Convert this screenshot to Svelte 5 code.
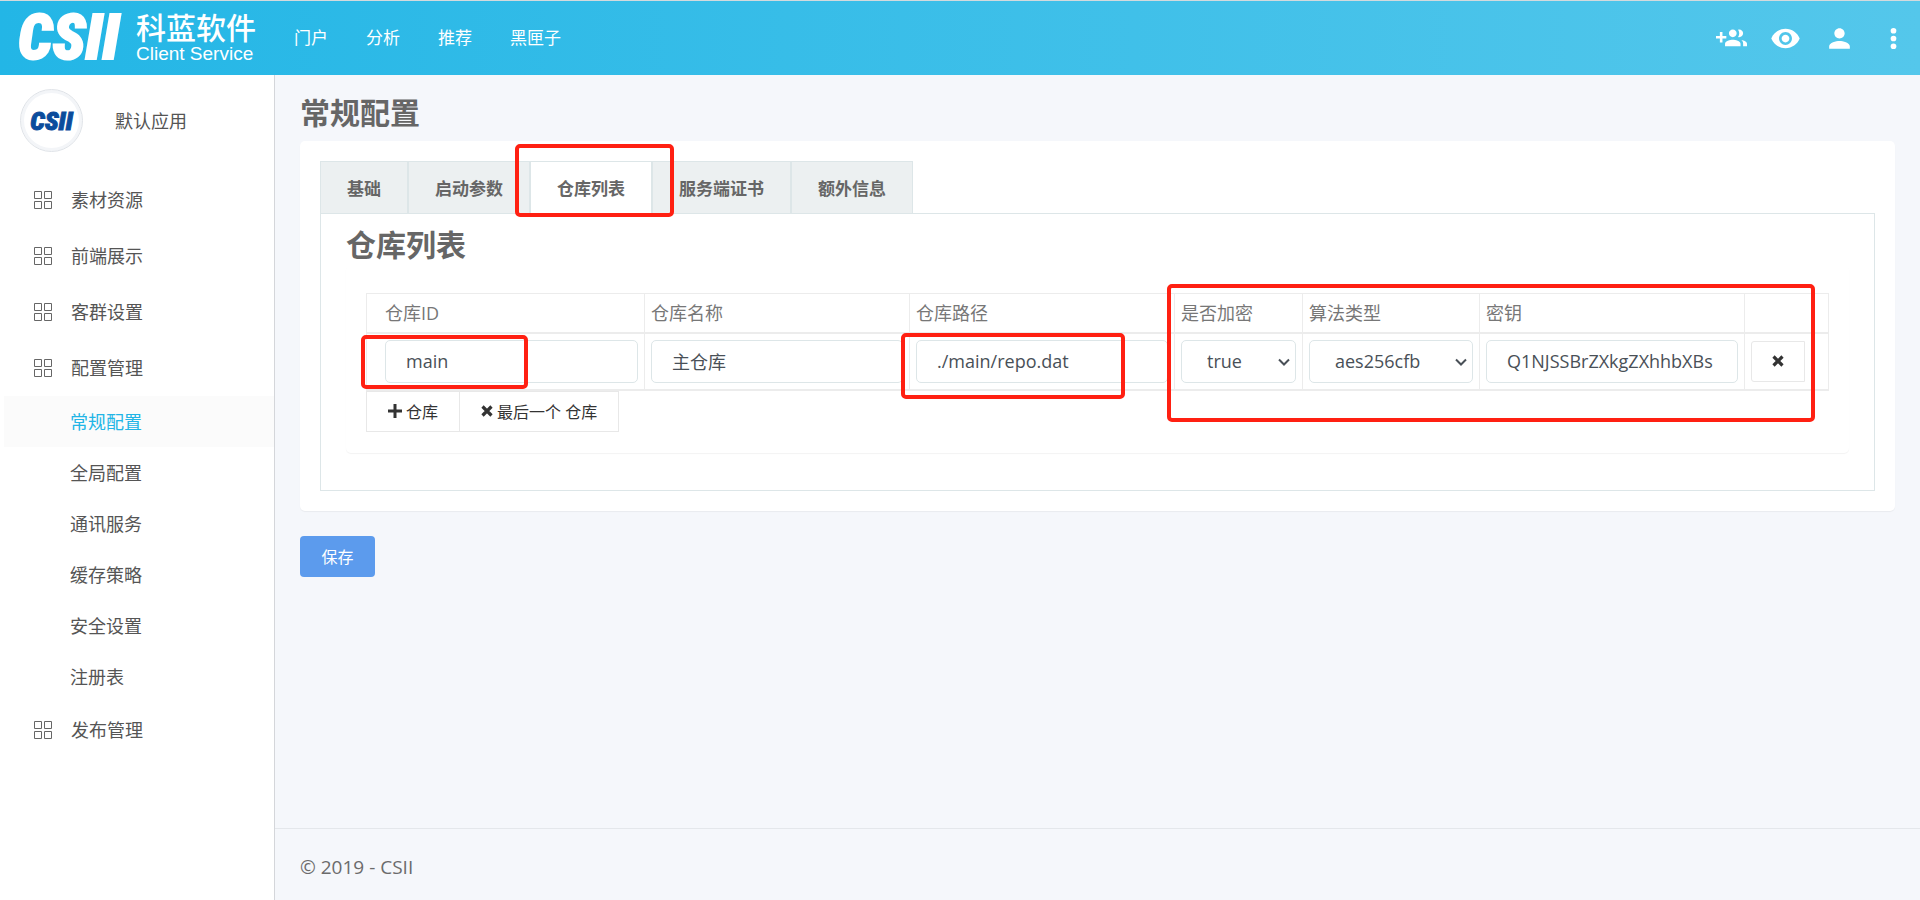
<script lang="ts">
	interface MenuItem {
		label: string
		children?: string[]
	}

	const nav = ['门户', '分析', '推荐', '黑匣子']
	const menu: MenuItem[] = [
		{ label: '素材资源' },
		{ label: '前端展示' },
		{ label: '客群设置' },
		{
			label: '配置管理',
			children: ['常规配置', '全局配置', '通讯服务', '缓存策略', '安全设置', '注册表']
		},
		{ label: '发布管理' }
	]
	const tabs = ['基础', '启动参数', '仓库列表', '服务端证书', '额外信息']

	let activeMenu = $state('常规配置')
	let activeTab = $state('仓库列表')
	let repo = $state({
		id: 'main',
		name: '主仓库',
		path: './main/repo.dat',
		encrypted: 'true',
		algorithm: 'aes256cfb',
		key: 'Q1NJSSBrZXkgZXhhbXBs'
	})
</script>

{#snippet cross()}
	<svg class="glyph" viewBox="0 0 12 12" aria-hidden="true">
		<path d="M1.500 1.500L10.500 10.500M10.500 1.500L1.500 10.500" stroke="currentColor" stroke-width="3.200" />
	</svg>
{/snippet}

{#snippet chevron()}
	<svg class="chevron" viewBox="0 0 12 8" aria-hidden="true">
		<path d="M1 1.500L6 6.500L11 1.500" fill="none" stroke="currentColor" stroke-width="2" />
	</svg>
{/snippet}

<div class="page">
	<header class="header">
		<a class="brand" href="#home">
			<span class="mark">CSII</span>
			<span class="brand-text">
				<span class="brand-name">科蓝软件</span>
				<span class="brand-sub">Client Service</span>
			</span>
		</a>
		<nav class="nav">
			{#each nav as item}
				<a href="#{item}">{item}</a>
			{/each}
		</nav>
		<div class="actions">
			<button aria-label="添加成员">
				<svg viewBox="0 0 24 24">
					<path d="M8 10H5V7H3v3H0v2h3v3h2v-3h3v-2zm10 1c1.66 0 2.99-1.34 2.99-3S19.66 5 18 5c-.32 0-.63.05-.91.14.57.81.9 1.79.9 2.86s-.34 2.04-.9 2.86c.28.09.59.14.91.14zm-5 0c1.66 0 2.99-1.34 2.99-3S14.66 5 13 5c-1.66 0-3 1.34-3 3s1.34 3 3 3zm6.62 2.16c.83.73 1.38 1.66 1.38 2.84v2h3v-2c0-1.54-2.37-2.49-4.38-2.84zM13 13c-2 0-6 1-6 3v2h12v-2c0-2-4-3-6-3z" />
				</svg>
			</button>
			<button aria-label="预览">
				<svg viewBox="0 0 24 24">
					<path d="M12 4.500C7 4.500 2.730 7.610 1 12c1.730 4.390 6 7.500 11 7.500s9.270-3.110 11-7.500c-1.730-4.390-6-7.500-11-7.500zM12 17c-2.760 0-5-2.240-5-5s2.240-5 5-5 5 2.240 5 5-2.240 5-5 5zm0-8c-1.660 0-3 1.340-3 3s1.340 3 3 3 3-1.340 3-3-1.340-3-3-3z" />
				</svg>
			</button>
			<button aria-label="用户">
				<svg viewBox="0 0 24 24">
					<path d="M12 12c2.210 0 4-1.790 4-4s-1.790-4-4-4-4 1.790-4 4 1.790 4 4 4zm0 2c-2.670 0-8 1.340-8 4v2h16v-2c0-2.660-5.330-4-8-4z" />
				</svg>
			</button>
			<button aria-label="更多">
				<svg viewBox="0 0 24 24">
					<circle cx="12" cy="6" r="2.200" />
					<circle cx="12" cy="12" r="2.200" />
					<circle cx="12" cy="18" r="2.200" />
				</svg>
			</button>
		</div>
	</header>

	<div class="body">
		<aside class="sidebar">
			<div class="profile">
				<div class="avatar"><span class="mark small">CSII</span></div>
				<span>默认应用</span>
			</div>
			<ul class="menu">
				{#each menu as item}
					<li>
						<a class="menu-item" href="#{item.label}">
							<svg class="grid-icon" viewBox="0 0 18 18" aria-hidden="true">
								<path d="M0.500 0.500h7v7h-7zM10.500 0.500h7v7h-7zM0.500 10.500h7v7h-7zM10.500 10.500h7v7h-7z" />
							</svg>
							{item.label}
						</a>
						{#if item.children}
							<ul class="submenu">
								{#each item.children as child}
									<li>
										<a
											href="#{child}"
											class:active={child === activeMenu}
											onclick={() => (activeMenu = child)}>{child}</a
										>
									</li>
								{/each}
							</ul>
						{/if}
					</li>
				{/each}
			</ul>
		</aside>

		<div class="main">
			<main class="content">
				<h1>常规配置</h1>
				<section class="card">
					<div class="tabs" role="tablist">
						{#each tabs as tab}
							<button
								role="tab"
								class="tab"
								class:active={tab === activeTab}
								aria-selected={tab === activeTab}
								onclick={() => (activeTab = tab)}
							>
								{tab}
								{#if tab === '仓库列表'}<span class="mark-box mark-tab"></span>{/if}
							</button>
						{/each}
					</div>
					<div class="panel">
						<h2>仓库列表</h2>
						<div class="well">
							<div class="table-wrap">
								<table>
									<colgroup>
										<col class="c-id" />
										<col class="c-text" />
										<col class="c-text" />
										<col class="c-enc" />
										<col class="c-alg" />
										<col class="c-text" />
										<col />
									</colgroup>
									<thead>
										<tr>
											<th id="h-id">仓库ID</th>
											<th id="h-name">仓库名称</th>
											<th id="h-path">仓库路径</th>
											<th id="h-enc">是否加密</th>
											<th id="h-alg">算法类型</th>
											<th id="h-key">密钥</th>
											<th></th>
										</tr>
									</thead>
									<tbody>
										<tr>
											<td>
												<input type="text" aria-labelledby="h-id" bind:value={repo.id} />
												<span class="mark-box mark-id"></span>
											</td>
											<td><input type="text" aria-labelledby="h-name" bind:value={repo.name} /></td>
											<td>
												<input type="text" aria-labelledby="h-path" bind:value={repo.path} />
												<span class="mark-box mark-path"></span>
											</td>
											<td>
												<div class="select">
													<select aria-labelledby="h-enc" bind:value={repo.encrypted}>
														<option>true</option>
														<option>false</option>
													</select>
													{@render chevron()}
												</div>
											</td>
											<td>
												<div class="select">
													<select aria-labelledby="h-alg" bind:value={repo.algorithm}>
														<option>aes256cfb</option>
														<option>aes128cfb</option>
													</select>
													{@render chevron()}
												</div>
											</td>
											<td><input type="text" aria-labelledby="h-key" bind:value={repo.key} /></td>
											<td><button class="plain remove" aria-label="删除">{@render cross()}</button></td>
										</tr>
									</tbody>
								</table>
								<span class="mark-box mark-secret"></span>
							</div>
							<div class="row-actions">
								<button class="plain">
									<svg class="glyph plus" viewBox="0 0 14 14" aria-hidden="true">
										<path d="M7 0V14M0 7H14" stroke="currentColor" stroke-width="3" />
									</svg>
									仓库
								</button>
								<button class="plain">{@render cross()} 最后一个 仓库</button>
							</div>
						</div>
					</div>
				</section>
				<button class="save">保存</button>
			</main>
			<footer class="footer">© 2019 - CSII</footer>
		</div>
	</div>
</div>

<style>
	:global(body) {
		background: #f5f7fb;
	}
	.page,
	.page :global(*) {
		box-sizing: border-box;
	}
	.page {
		display: flex;
		flex-direction: column;
		min-height: 100vh;
		color: #555;
		font-family: 'Open Sans', 'Noto Sans CJK SC', sans-serif;
		font-size: 18px;
		line-height: 24px;
	}
	a {
		color: inherit;
		text-decoration: none;
	}
	button {
		font-family: inherit;
		cursor: pointer;
	}
	ul {
		list-style: none;
		margin: 0;
		padding: 0;
	}

	.header {
		display: flex;
		align-items: center;
		height: 75px;
		padding: 0 11px 0 18px;
		border-top: 1px solid #d3dadd;
		background: linear-gradient(90deg, #23b6e6, #54c7eb);
		color: #fff;
	}
	.brand {
		display: flex;
		align-items: center;
		width: 258px;
		gap: 12px;
	}
	.mark {
		width: 106px;
		font-family: 'Roboto Condensed', Roboto, sans-serif;
		font-size: 62px;
		font-style: italic;
		font-weight: 900;
		line-height: 64px;
		-webkit-text-stroke: 2px currentColor;
	}
	.mark.small {
		width: auto;
		color: #0b4c9c;
		font-size: 26px;
		line-height: 28px;
		-webkit-text-stroke: 1px currentColor;
	}
	.brand-text {
		display: flex;
		flex-direction: column;
		gap: 4px;
		white-space: nowrap;
	}
	.brand-name {
		font-family: 'Noto Sans CJK SC', sans-serif;
		font-size: 30px;
		font-weight: 500;
		line-height: 28px;
	}
	.brand-sub {
		font-family: 'Liberation Sans', sans-serif;
		font-size: 19px;
		line-height: 20px;
	}
	.nav {
		display: flex;
		gap: 38px;
		padding-left: 18px;
		font-size: 17px;
	}
	.actions {
		display: flex;
		gap: 23px;
		margin-left: auto;
	}
	.actions button {
		display: flex;
		padding: 0;
		border: 0;
		background: none;
	}
	.actions svg {
		width: 31px;
		height: 31px;
		fill: #fff;
	}

	.body {
		display: flex;
		flex: 1;
	}
	.sidebar {
		flex: none;
		width: 275px;
		border-right: 1px solid #d4d6da;
		background: #fff;
	}
	.profile {
		display: flex;
		align-items: center;
		gap: 32px;
		padding: 14px 20px 20px;
	}
	.avatar {
		display: flex;
		align-items: center;
		justify-content: center;
		width: 63px;
		height: 63px;
		border: 1px solid #dfe3e8;
		border-radius: 50%;
		box-shadow: inset 0 0 0 3px #f3f5f8;
	}
	.menu-item {
		display: flex;
		align-items: center;
		gap: 19px;
		height: 56px;
		padding-left: 34px;
	}
	.grid-icon {
		width: 18px;
		height: 18px;
		fill: none;
		stroke: #666;
	}
	.submenu a {
		display: flex;
		align-items: center;
		height: 51px;
		margin-left: 4px;
		padding-left: 66px;
	}
	.submenu a.active {
		background: #fbfbfb;
		color: #22b5e6;
	}

	.main {
		display: flex;
		flex: 1;
		flex-direction: column;
		min-width: 0;
	}
	.content {
		flex: 1;
		padding: 18px 25px;
	}
	h1,
	h2 {
		margin: 0;
		color: #666;
		font-size: 30px;
		font-weight: 700;
		line-height: 40px;
	}
	.card {
		margin-top: 8px;
		padding: 20px;
		border-radius: 5px;
		background: #fff;
		box-shadow: 0 1px 1px rgba(0, 0, 0, 0.05);
	}
	.tabs {
		display: flex;
	}
	.tab {
		position: relative;
		height: 52px;
		padding: 0 26px;
		border: 1px solid #dde6e8;
		border-bottom: 0;
		background: #ecf0f1;
		color: #666;
		font-size: 17px;
		font-weight: 700;
	}
	.tab.active {
		background: #fff;
	}
	.panel {
		padding: 11px 25px 37px;
		border: 1px solid #dde6e8;
	}
	.well {
		padding: 28px 20px 21px;
		border-radius: 5px;
		box-shadow: 0 1px 1px rgba(0, 0, 0, 0.05);
	}
	.table-wrap {
		position: relative;
	}
	table {
		width: 100%;
		border-collapse: collapse;
		table-layout: fixed;
	}
	.c-id {
		width: 278px;
	}
	.c-text {
		width: 265px;
	}
	.c-enc {
		width: 128px;
	}
	.c-alg {
		width: 177px;
	}
	th,
	td {
		position: relative;
		padding: 0 6px;
		border: 1px solid #ececec;
		border-bottom-width: 2px;
	}
	th:first-child,
	td:first-child {
		padding-left: 18px;
	}
	th {
		height: 39px;
		color: #777;
		font-weight: 400;
		text-align: left;
	}
	td {
		height: 57px;
	}
	input,
	select {
		display: block;
		width: 100%;
		height: 43px;
		border: 1px solid #dde6e8;
		border-radius: 5px;
		background: #fff;
		color: #495057;
		font-family: inherit;
		font-size: 18px;
	}
	input {
		padding: 0 20px;
	}
	.select {
		position: relative;
	}
	select {
		appearance: none;
		padding: 0 24px 0 25px;
	}
	.chevron {
		position: absolute;
		top: 18px;
		right: 6px;
		width: 12px;
		height: 8px;
		color: #495057;
		pointer-events: none;
	}
	.plain {
		display: flex;
		align-items: center;
		justify-content: center;
		gap: 4px;
		height: 41px;
		padding: 0 21px;
		border: 1px solid #e8e8e8;
		background: #fff;
		color: #333;
		font-size: 16px;
	}
	.remove {
		width: 54px;
		border-radius: 3px 0 0 3px;
	}
	.glyph {
		flex: none;
		width: 12px;
		height: 12px;
	}
	.glyph.plus {
		width: 14px;
		height: 14px;
	}
	.row-actions {
		display: flex;
	}
	.row-actions .plain + .plain {
		border-left: 0;
	}

	/* red callouts drawn over the controls */
	.mark-box {
		position: absolute;
		z-index: 1;
		border: 4px solid #ff2012;
		border-radius: 5px;
		pointer-events: none;
	}
	.mark-tab {
		inset: -18px -23px -4px -16px;
	}
	.mark-id {
		top: 1px;
		left: -6px;
		width: 167px;
		height: 54px;
	}
	.mark-path {
		top: -1px;
		left: -9px;
		width: 224px;
		height: 66px;
	}
	.mark-secret {
		top: -9px;
		right: 14px;
		width: 648px;
		height: 138px;
	}

	.save {
		display: block;
		width: 75px;
		height: 41px;
		margin-top: 25px;
		border: 0;
		border-radius: 4px;
		background: #5c9bed;
		color: #fff;
		font-size: 16px;
	}
	.footer {
		padding: 26px 25px 21px;
		border-top: 1px solid #e4e7eb;
		color: #6b6b6b;
		font-size: 19px;
	}
</style>
